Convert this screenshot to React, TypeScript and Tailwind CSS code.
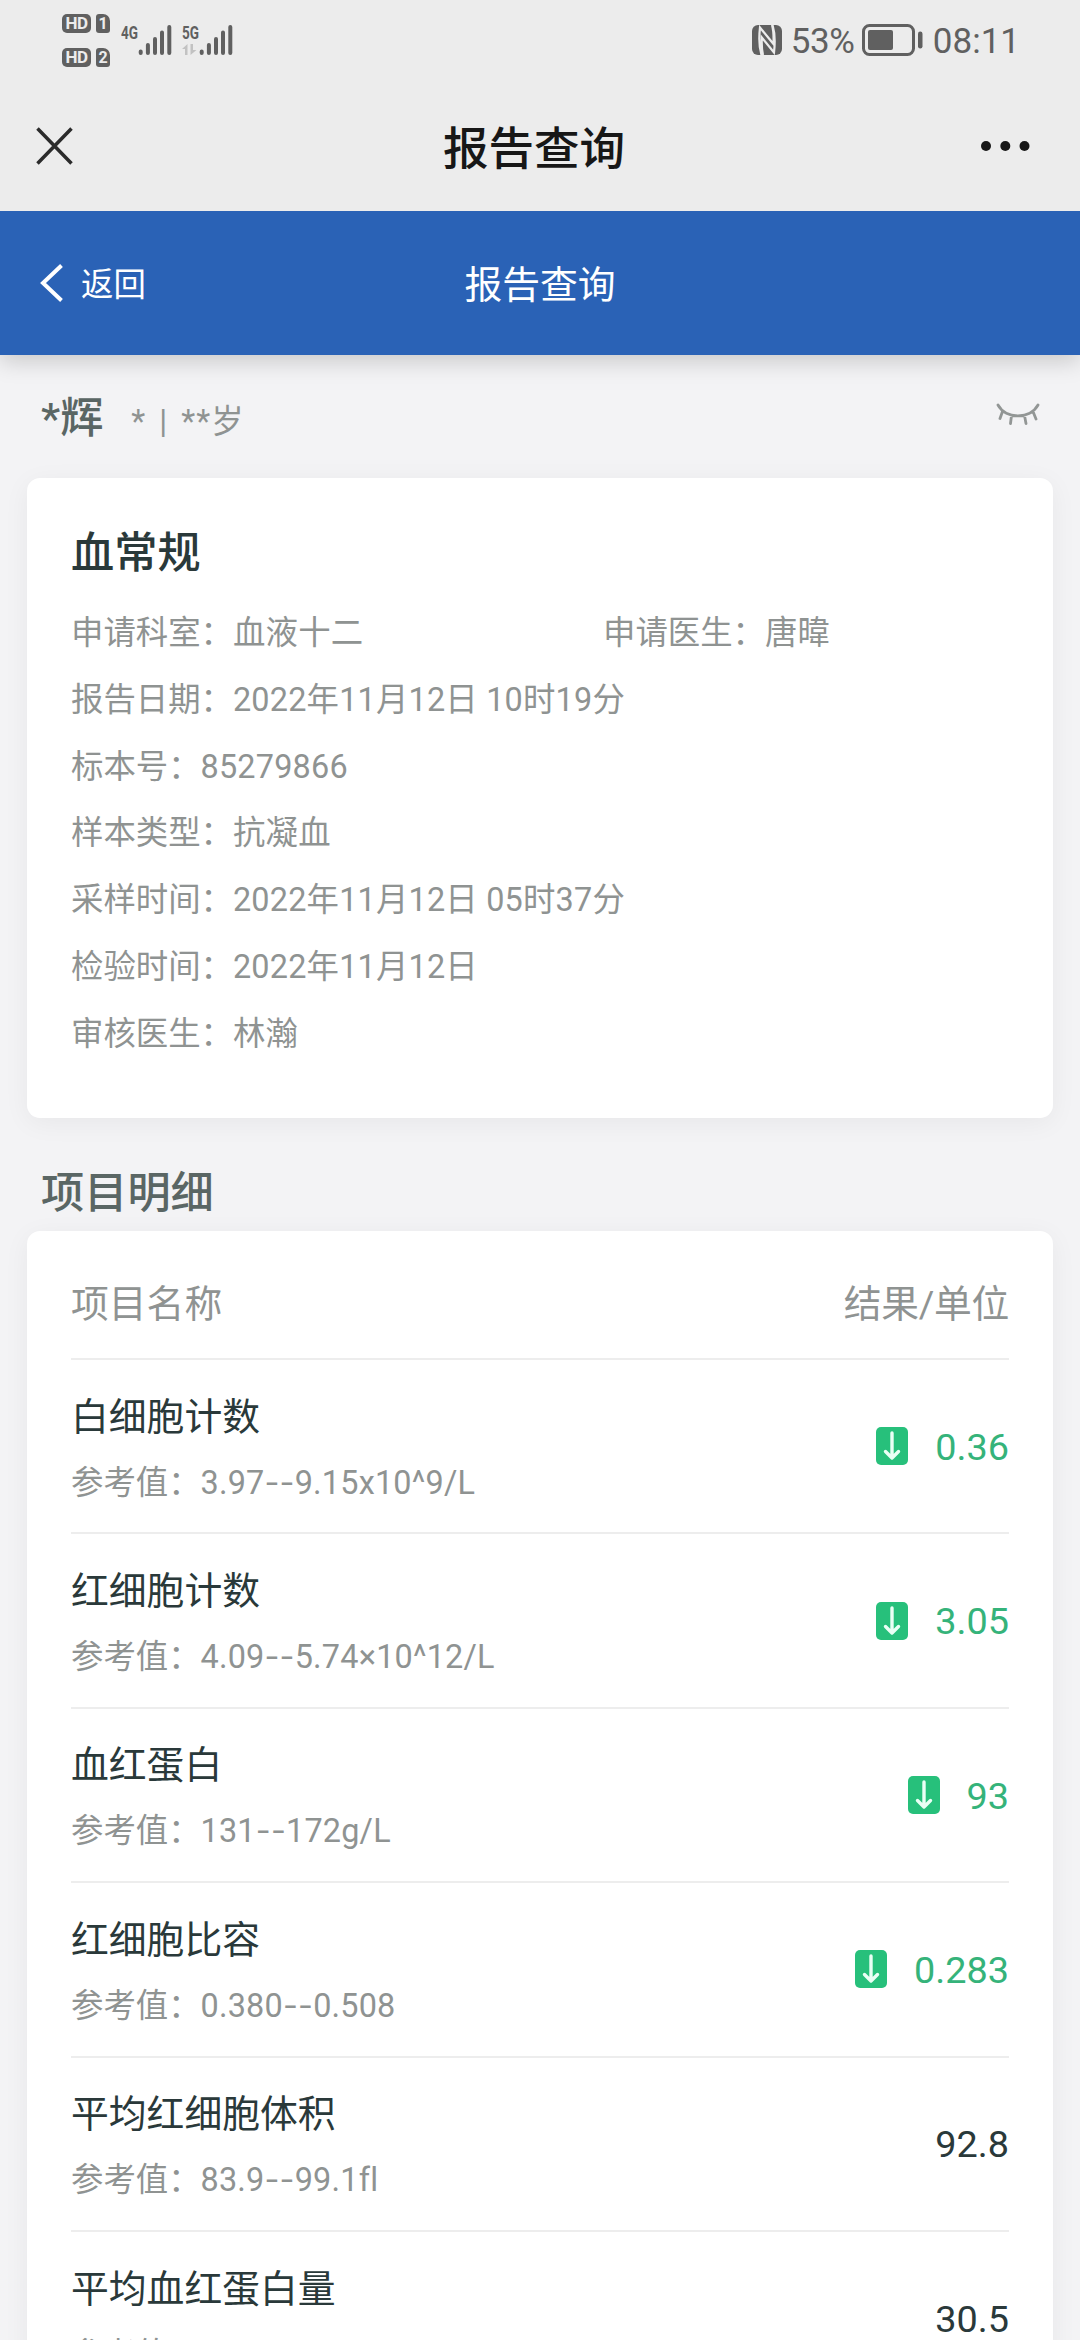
import { ReactNode } from "react";

interface IInfoItem {
  label: string;
  value: string;
}

interface ITestItem {
  name: string;
  min: string;
  max: string;
  result: string;
  low?: boolean;
}

const infoRows: IInfoItem[][] = [
  [
    { label: "申请科室", value: "血液十二" },
    { label: "申请医生", value: "唐暐" },
  ],
  [{ label: "报告日期", value: "2022年11月12日 10时19分" }],
  [{ label: "标本号", value: "85279866" }],
  [{ label: "样本类型", value: "抗凝血" }],
  [{ label: "采样时间", value: "2022年11月12日 05时37分" }],
  [{ label: "检验时间", value: "2022年11月12日" }],
  [{ label: "审核医生", value: "林瀚" }],
];

const testItems: ITestItem[] = [
  { name: "白细胞计数", min: "3.97", max: "9.15x10^9/L", result: "0.36", low: true },
  { name: "红细胞计数", min: "4.09", max: "5.74×10^12/L", result: "3.05", low: true },
  { name: "血红蛋白", min: "131", max: "172g/L", result: "93", low: true },
  { name: "红细胞比容", min: "0.380", max: "0.508", result: "0.283", low: true },
  { name: "平均红细胞体积", min: "83.9", max: "99.1fl", result: "92.8" },
  { name: "平均血红蛋白量", min: "27.8", max: "33.8pg", result: "30.5" },
];

const SimBadge = ({ slot }: { slot: string }) => (
  <div className="flex gap-[5px] text-[#ececec] font-bold leading-[19px] text-center">
    <span className="w-[29px] h-[19px] rounded-[5px] bg-[#606060] text-[17px] tracking-[-0.5px]">
      HD
    </span>
    <span className="w-[14px] h-[19px] rounded-[3px] rounded-tr-[7px] bg-[#606060] text-[16px]">
      {slot}
    </span>
  </div>
);

const Signal = ({ label, children }: { label: string; children?: ReactNode }) => (
  <svg width="51" height="34" viewBox="0 0 51 34">
    <text
      x="0"
      y="16.5"
      fontSize="18"
      fontWeight="700"
      textLength="17"
      lengthAdjust="spacingAndGlyphs"
      fill="#606060"
    >
      {label}
    </text>
    {children}
    <path
      d="M19.700 29.500v1.500M26.900 23v8M34 17v14M41 10.500v20.500M48.300 5v26"
      stroke="#606060"
      strokeWidth="4"
      strokeLinecap="round"
    />
  </svg>
);

const StatusBar = () => (
  <div className="h-20 flex justify-between pl-[62px] pr-[60px] text-[#606060]">
    <div className="flex items-start">
      <div className="flex flex-col gap-[15px] pt-[14px] mr-[11px]">
        <SimBadge slot="1" />
        <SimBadge slot="2" />
      </div>
      <div className="flex gap-[10px] pt-[22px]">
        <Signal label="4G" />
        <Signal label="5G">
          <path
            d="M0 27l5.500-5v11h-2.500v-6zM8.500 22v11l6-5h-3.500v-6z"
            fill="#c2c2c2"
          />
        </Signal>
      </div>
    </div>
    <div className="flex items-center text-[35px]">
      <svg width="30" height="30" viewBox="0 0 30 30" className="mr-[9px]">
        <rect width="30" height="30" rx="6" fill="#606060" />
        <path
          d="M9.500 30C7 22 7 11 8 2.500L21.500 19c.3-7 .2-13-1.500-19M20.500 0c2.500 8 2.500 19 1.500 27.500L9.800 12.500c-.3 6 0 12 1.200 17.500"
          fill="none"
          stroke="#ececec"
          strokeWidth="2.200"
        />
      </svg>
      <span className="tracking-[-0.4px] w-[70px] pt-[5px]">53%</span>
      <svg width="61" height="32" viewBox="0 0 61 32" className="ml-[1px]">
        <rect x="1.500" y="1.500" width="50" height="29" rx="6" fill="none" stroke="#606060" strokeWidth="3" />
        <rect x="6" y="6" width="25" height="20" rx="2" fill="#606060" />
        <rect x="56" y="7.500" width="4.500" height="17" rx="2.200" fill="#606060" />
      </svg>
      <span className="ml-[10px] pt-[5px]">08:11</span>
    </div>
  </div>
);

const TitleBar = () => (
  <div className="h-[131px] grid grid-cols-3 items-center pl-9 pr-[50px]">
    <svg width="37" height="38" viewBox="0 0 37 38">
      <path d="M1.500 1.500l34 35M35.500 1.500l-34 35" stroke="#2b2b2b" strokeWidth="3.500" />
    </svg>
    <h1 className="text-[45.5px] leading-[60px] font-medium text-[#171717] text-center whitespace-nowrap pt-[8px] pl-[2px]">
      报告查询
    </h1>
    <svg width="50" height="12" viewBox="0 0 50 12" className="justify-self-end">
      <g fill="#171717">
        <circle cx="6" cy="6" r="5" />
        <circle cx="25.300" cy="6" r="5" />
        <circle cx="44.500" cy="6" r="5" />
      </g>
    </svg>
  </div>
);

const NavBar = () => (
  <div className="h-36 grid grid-cols-3 items-center px-10 bg-[#2a62b6] text-white shadow-[0_6px_22px_rgba(0,0,0,0.18)]">
    <button className="flex items-center text-[32.4px] leading-[48px]">
      <svg width="24" height="38" viewBox="0 0 24 38" className="mr-[17px]">
        <path d="M21.500 1.500L3 19l18.500 17.500" fill="none" stroke="#fff" strokeWidth="4" />
      </svg>
      <span className="pt-[3px]">返回</span>
    </button>
    <h2 className="text-[37.8px] leading-[56px] pt-[3px] text-center">报告查询</h2>
  </div>
);

const Card = ({ children }: { children: ReactNode }) => (
  <section className="mx-[27px] px-11 bg-white rounded-[13px] shadow-[0_5px_27px_rgba(0,0,0,0.05)]">
    {children}
  </section>
);

const LowIcon = () => (
  <svg width="32" height="38" viewBox="0 0 32 38" className="mr-[27px]">
    <rect width="32" height="38" rx="5" fill="#27c07b" />
    <path
      d="M16 6v24M9.500 24.500L16 31l6.500-6.500"
      fill="none"
      stroke="#eafff5"
      strokeWidth="3.400"
      strokeLinecap="round"
      strokeLinejoin="round"
    />
  </svg>
);

const App = () => {
  return (
    <div
      lang="zh-CN"
      className="w-[1080px] h-[2340px] overflow-hidden bg-[#f3f3f5] font-[Roboto,'Noto_Sans_CJK_SC',sans-serif]"
    >
      <header className="bg-[#ececec] relative z-10">
        <StatusBar />
        <TitleBar />
      </header>
      <NavBar />

      <div className="h-[123px] flex items-center justify-between pl-[41px] pr-10">
        <p className="flex items-baseline pt-[5px]">
          <span className="text-[43.2px] font-medium text-[#5a6664]">*辉</span>
          <span className="ml-7 text-[32.4px] tracking-[1px] [word-spacing:4px] text-[#8f9392]">
            * | **岁
          </span>
        </p>
        <svg width="44" height="23" viewBox="0 0 44 23" className="mt-[-5px]">
          <path
            d="M2 2c8 14.500 32 14.500 40 0M6.500 8.500L4 15.500M15.500 12.500L14.500 20.500M28.500 12.500L30 20.500M37 8.500L40 16"
            fill="none"
            stroke="#929695"
            strokeWidth="2.800"
            strokeLinecap="round"
          />
        </svg>
      </div>

      <Card>
        <div className="h-[640px] pt-[43px]">
          <h3 className="mb-[13px] text-[43.2px] leading-[66px] font-medium text-[#2a393a]">
            血常规
          </h3>
          {infoRows.map((row) => (
            <div
              key={row[0].label}
              className="grid grid-cols-[532px_1fr] text-[32.4px] leading-[66.8px] whitespace-nowrap text-[#8f9392]"
            >
              {row.map((item) => (
                <p key={item.label}>
                  {item.label}：<span className="tracking-[0.2px]">{item.value}</span>
                </p>
              ))}
            </div>
          ))}
        </div>
      </Card>

      <h3 className="pl-[41px] pt-[43px] h-[113px] text-[43.2px] leading-[66px] font-medium text-[#5a6664]">
        项目明细
      </h3>

      <Card>
        <div className="h-[129px] pt-[19px] flex items-center justify-between border-b-2 border-[#ededed] text-[37.8px] text-[#8f9392]">
          <span>项目名称</span>
          <span className="tracking-[-0.3px]">结果/单位</span>
        </div>
        {testItems.map((item) => (
          <div
            key={item.name}
            className="h-[174.4px] flex items-center justify-between border-b-2 border-[#ededed]"
          >
            <div className="pt-[8px] leading-[65px]">
              <p className="text-[37.8px] text-[#2a393a]">{item.name}</p>
              <p className="text-[32.4px] text-[#8f9392]">
                参考值：
                <span className="tracking-[0.2px]">
                  {item.min}
                  <span className="font-[Inter,sans-serif]">--</span>
                  {item.max}
                </span>
              </p>
            </div>
            <div
              className={`flex items-center text-[37.8px] ${
                item.low ? "text-[#35b37a]" : "text-[#2a393a]"
              }`}
            >
              {item.low && <LowIcon />}
              <span className="pt-[2px]">{item.result}</span>
            </div>
          </div>
        ))}
      </Card>
    </div>
  );
};

export default App;
